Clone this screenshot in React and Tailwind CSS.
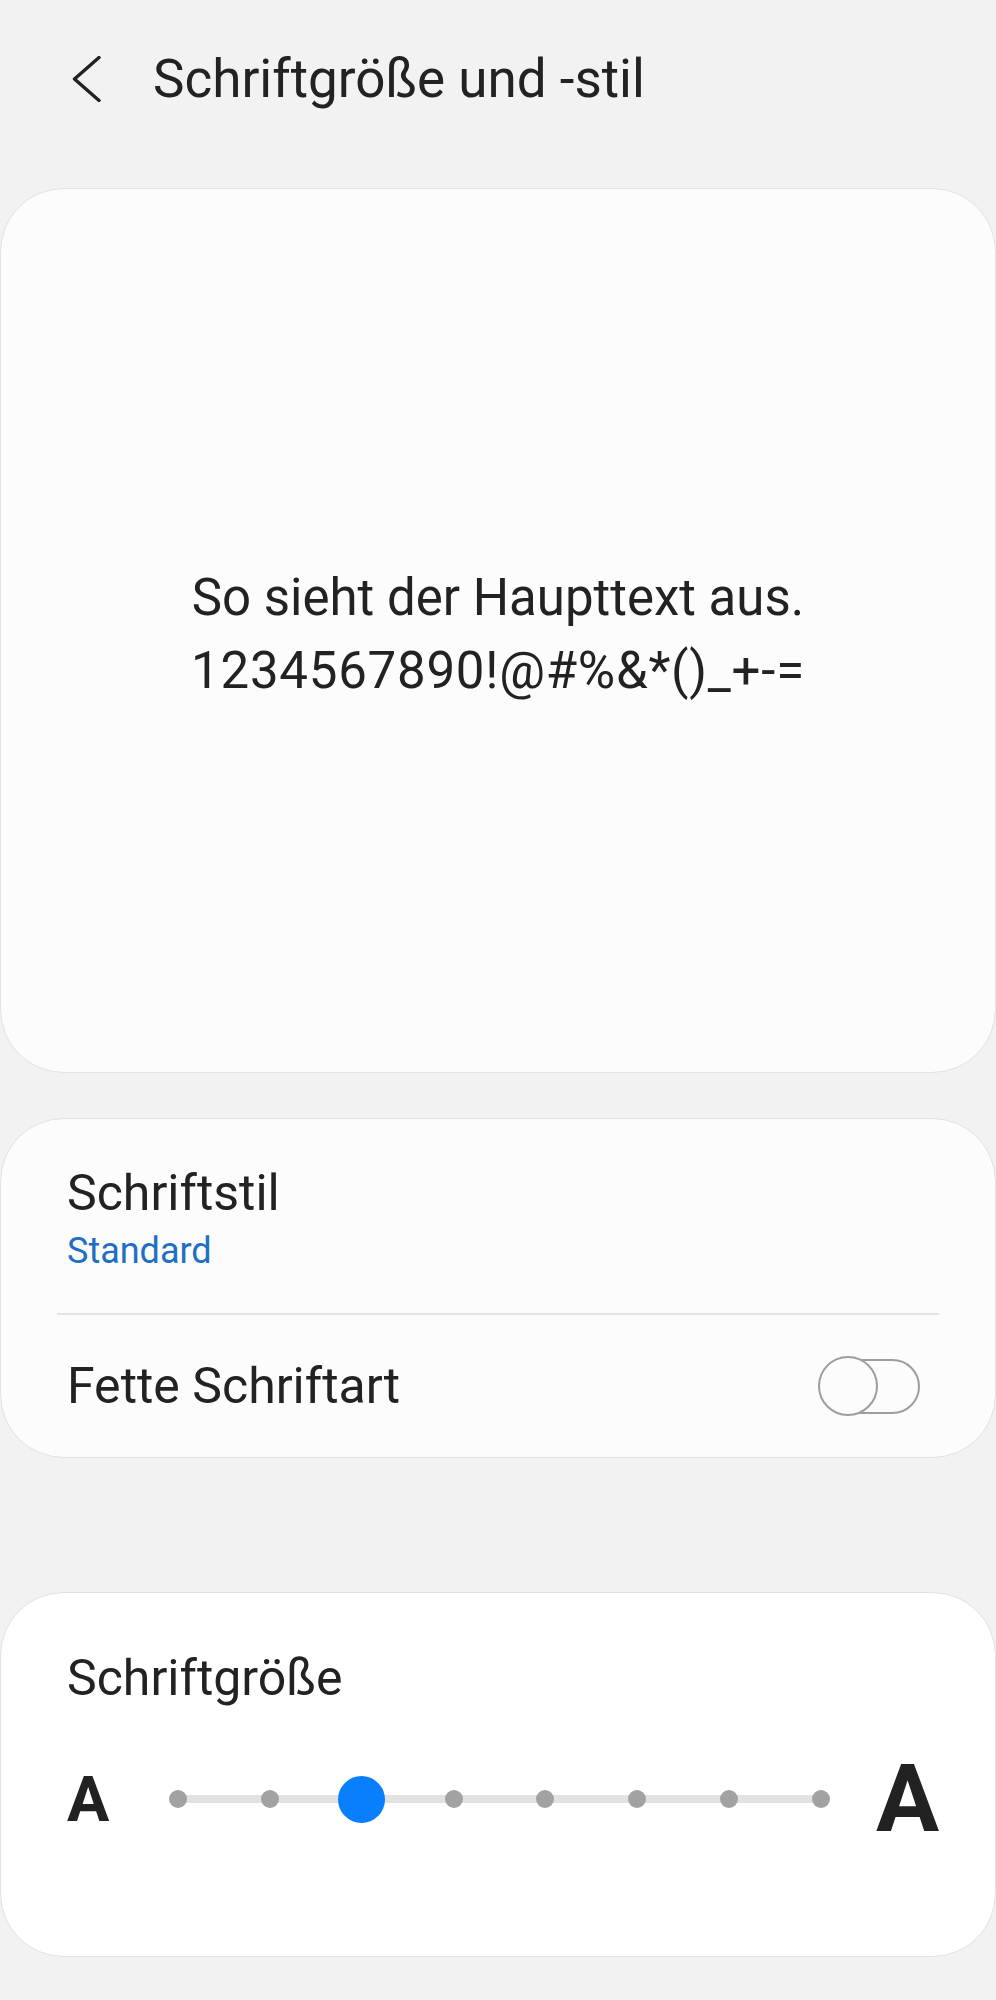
import { useState } from "react";

const steps = [0, 1, 2, 3, 4, 5, 6, 7];

function BackIcon() {
  return (
    <svg width="30" height="46" viewBox="0 0 30 46" fill="none">
      <path
        d="M27 1.5 L2.5 23 L27 44.5"
        stroke="#222222"
        strokeWidth="3.4"
        strokeLinecap="round"
        strokeLinejoin="round"
      />
    </svg>
  );
}

function Toggle({ on }) {
  return (
    <div className="relative h-[60px] w-[102px] shrink-0">
      <div className="absolute left-[10px] top-[3px] h-[55px] w-[92px] rounded-full border-[2.5px] border-[#9e9e9e]" />
      <div
        className={
          on
            ? "absolute right-0 top-0 h-[60px] w-[60px] rounded-full border-[2.5px] border-[#0a7cff] bg-[#fcfcfc]"
            : "absolute left-0 top-0 h-[60px] w-[60px] rounded-full border-[2.5px] border-[#9e9e9e] bg-[#fcfcfc]"
        }
      />
    </div>
  );
}

function SizeSlider({ value }) {
  return (
    <div className="relative flex h-[48px] w-[661px] shrink-0 items-center justify-between">
      <div className="absolute left-[9px] right-[9px] top-1/2 h-[8px] -translate-y-1/2 bg-[#e2e2e2]" />
      {steps.map((s) => (
        <div key={s} className="relative flex w-[18px] justify-center">
          {s === value ? (
            <div className="h-[47px] w-[47px] shrink-0 rounded-full bg-[#0a7ffd]" />
          ) : (
            <div className="h-[18px] w-[18px] shrink-0 rounded-full bg-[#a2a2a2]" />
          )}
        </div>
      ))}
    </div>
  );
}

export default function App() {
  const [bold] = useState(false);

  return (
    <div className="min-h-[2000px] bg-[#f2f2f2] font-['Roboto',sans-serif] text-[#222222]">
      <header className="flex h-[158px] items-center pl-[72px]">
        <BackIcon />
        <h1 className="ml-[51px] text-[53px] font-normal leading-[60px]">
          Schriftgröße und -stil
        </h1>
      </header>

      <section className="mt-[30px] flex h-[885px] items-center justify-center rounded-[64px] border border-[#e2e2e2] bg-[#fcfcfc]">
        <p className="pt-[7px] text-center text-[51px] leading-[73px]">
          So sieht der Haupttext aus.
          <br />
          <span className="tracking-[0.75px]">1234567890!@#%&amp;*()_+-=</span>
        </p>
      </section>

      <section className="mt-[45px] rounded-[64px] border border-[#e2e2e2] bg-[#fcfcfc] px-[56px]">
        <div className="pb-[40px] pl-[10px] pt-[45px]">
          <div className="text-[50px] leading-[58px]">Schriftstil</div>
          <div className="mt-[7px] text-[36px] leading-[44px] text-[#1f6fc2]">Standard</div>
        </div>
        <div className="h-[2px] bg-[#e4e4e4]" />
        <div className="flex h-[142px] items-center justify-between pl-[10px] pr-[19px]">
          <div className="text-[50px] leading-[58px]">Fette Schriftart</div>
          <Toggle on={bold} />
        </div>
      </section>

      <section className="mt-[134px] h-[365px] rounded-[64px] border border-[#e2e2e2] bg-white pl-[66px] pr-[40px] pt-[56px]">
        <div className="text-[50px] leading-[58px]">Schriftgröße</div>
        <div className="mt-[44px] flex h-[96px] items-center">
          <span className="w-[102px] shrink-0 text-[63px] font-bold leading-none">A</span>
          <SizeSlider value={2} />
          <span className="ml-[46px] shrink-0 text-[94px] font-bold leading-none">A</span>
        </div>
      </section>
    </div>
  );
}
